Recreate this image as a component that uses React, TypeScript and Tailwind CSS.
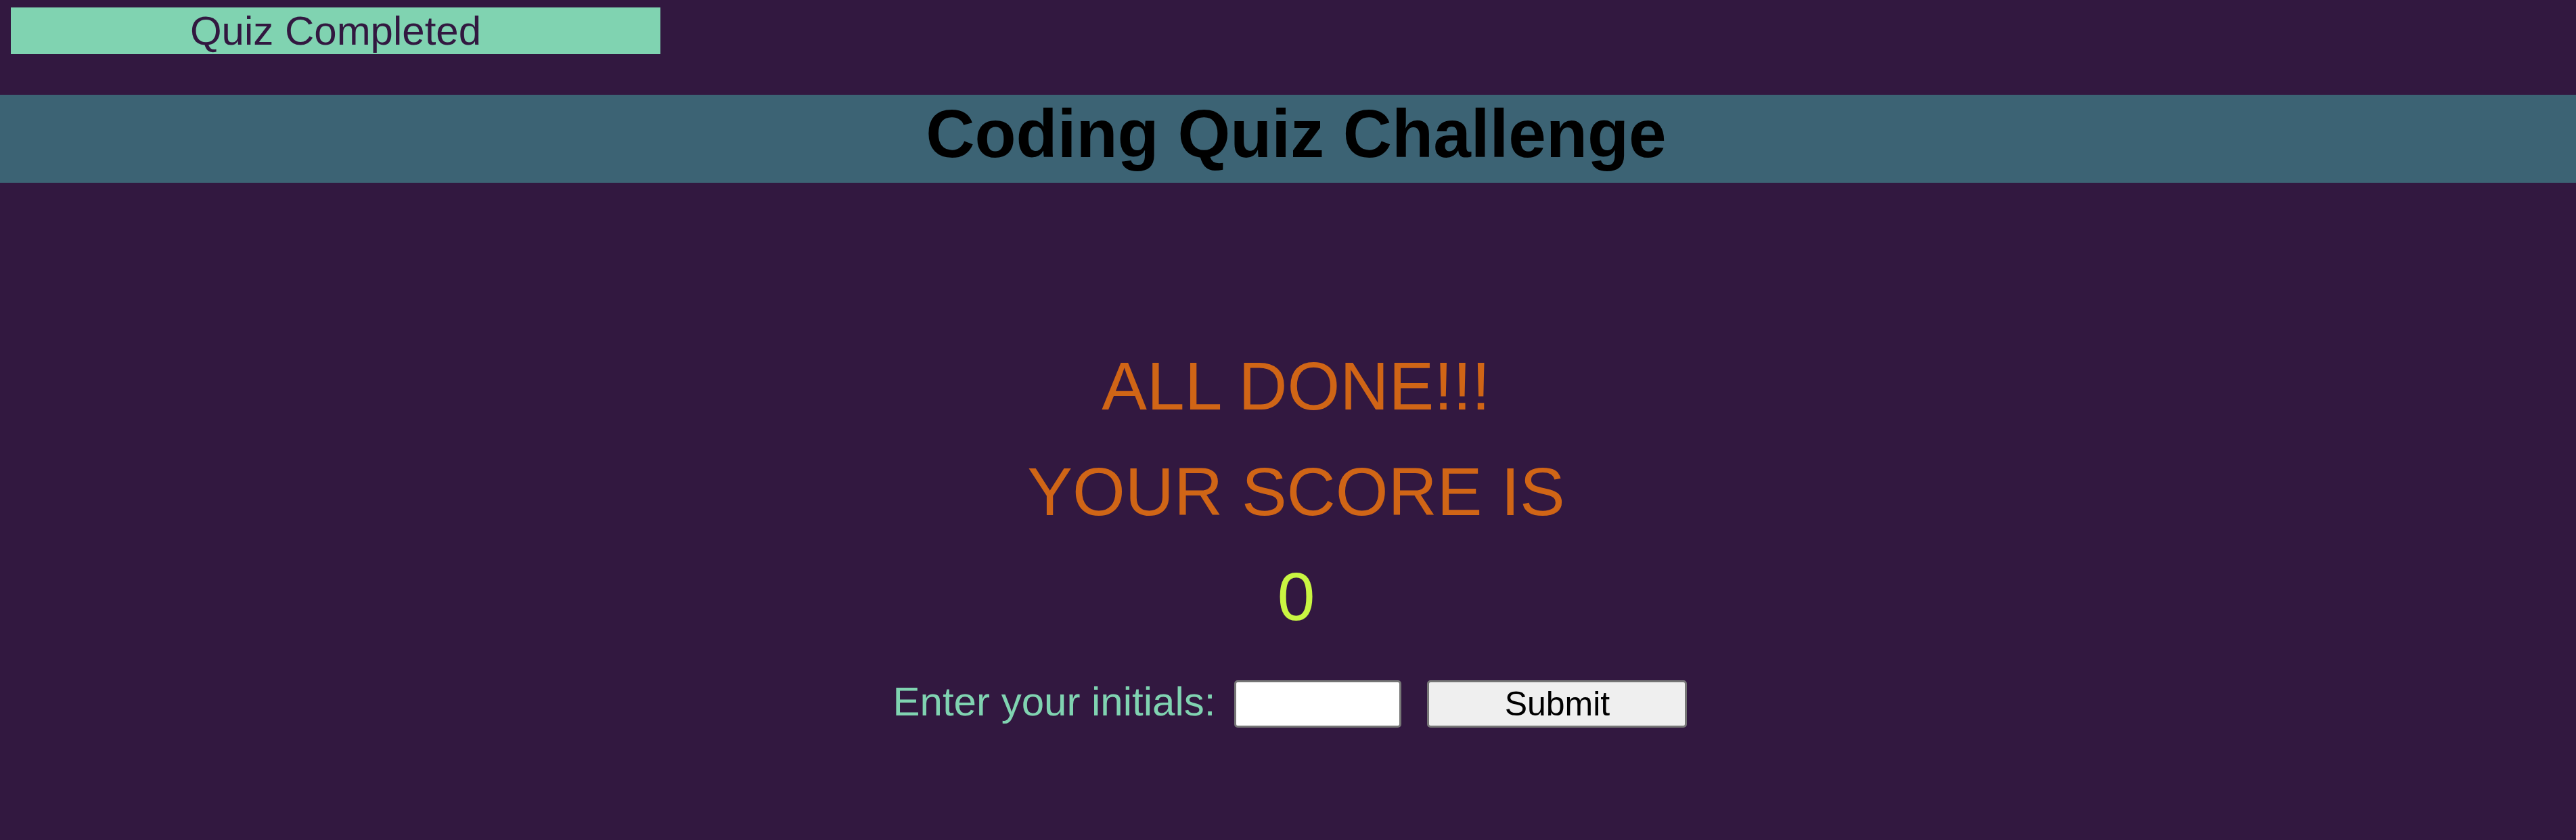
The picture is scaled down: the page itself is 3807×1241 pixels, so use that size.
export default function App() {
  return (
    <div className="min-h-screen w-full bg-[#321840] font-['Liberation_Sans',Arial,sans-serif]">
      <div className="pt-[11px] pl-[16px]">
        <div className="w-[960px] h-[69px] bg-[#80d3b1] text-[#321840] text-[60px] leading-[69px] text-center">
          Quiz Completed
        </div>
      </div>
      <header className="mt-[60px] h-[130px] bg-[#3c6374] pl-[24px]">
        <h1 className="text-[100px] leading-[115px] font-bold text-black text-center">
          Coding Quiz Challenge
        </h1>
      </header>
      <main className="pl-[24px] pt-[243px] flex flex-col items-center gap-[40.5px]">
        <p className="text-[100px] leading-[115px] text-[#d06516]">ALL DONE!!!</p>
        <p className="text-[100px] leading-[115px] text-[#d06516]">YOUR SCORE IS</p>
        <p className="text-[100px] leading-[115px] text-[#c9f542]">0</p>
      </main>
      <form
        className="mt-[63px] pl-[6px] flex items-center justify-center"
        onSubmit={(e) => e.preventDefault()}
      >
        <label className="text-[60px] leading-[69px] text-[#80d3b1] mb-[7px]">
          Enter your initials:
        </label>
        <input
          type="text"
          className="ml-[28px] w-[247px] h-[70px] bg-white border-[3px] border-[#767676] rounded-[5px] text-[50px] text-black px-2"
        />
        <button
          type="submit"
          className="ml-[38px] w-[384px] h-[70px] bg-[#efefef] border-[3px] border-[#767676] rounded-[5px] text-[50px] leading-[60px] text-black"
        >
          Submit
        </button>
      </form>
    </div>
  );
}
